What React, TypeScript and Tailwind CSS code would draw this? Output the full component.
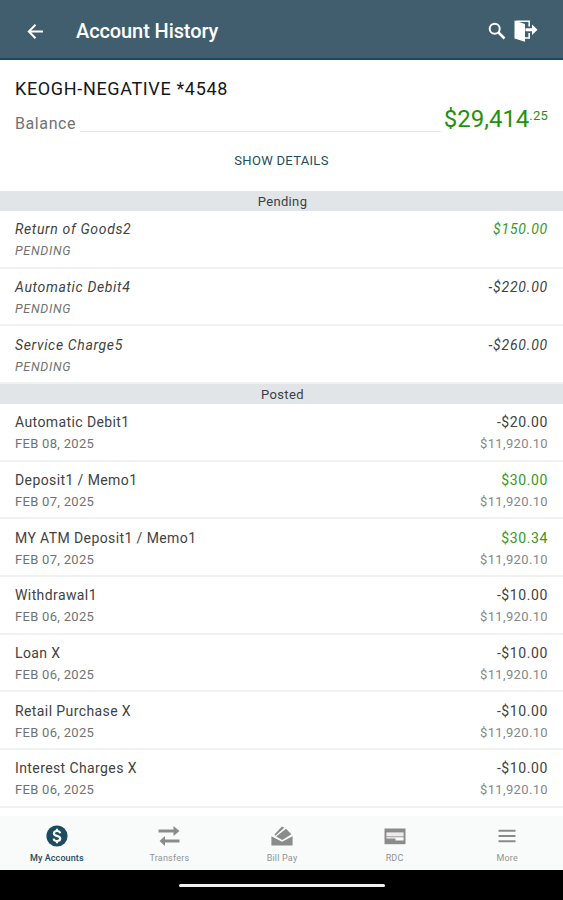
import { ReactNode } from "react";
import { clsx } from "clsx";

interface ITransaction {
    title: string;
    note: string;
    amount: string;
    balance?: string;
    isCredit?: boolean;
}

interface INavItem {
    label: string;
    icon: ReactNode;
    isActive?: boolean;
}

const pending: ITransaction[] = [
    { title: "Return of Goods2", note: "PENDING", amount: "$150.00", isCredit: true },
    { title: "Automatic Debit4", note: "PENDING", amount: "-$220.00" },
    { title: "Service Charge5", note: "PENDING", amount: "-$260.00" },
];

const posted: ITransaction[] = [
    { title: "Automatic Debit1", note: "FEB 08, 2025", amount: "-$20.00", balance: "$11,920.10" },
    { title: "Deposit1 / Memo1", note: "FEB 07, 2025", amount: "$30.00", balance: "$11,920.10", isCredit: true },
    { title: "MY ATM Deposit1 / Memo1", note: "FEB 07, 2025", amount: "$30.34", balance: "$11,920.10", isCredit: true },
    { title: "Withdrawal1", note: "FEB 06, 2025", amount: "-$10.00", balance: "$11,920.10" },
    { title: "Loan X", note: "FEB 06, 2025", amount: "-$10.00", balance: "$11,920.10" },
    { title: "Retail Purchase X", note: "FEB 06, 2025", amount: "-$10.00", balance: "$11,920.10" },
    { title: "Interest Charges X", note: "FEB 06, 2025", amount: "-$10.00", balance: "$11,920.10" },
];

const navItems: INavItem[] = [
    {
        label: "My Accounts",
        isActive: true,
        icon: (
            <svg width="22" height="22" viewBox="0 0 22 22" fill="none">
                <circle cx="11" cy="11" r="10.6" fill="#1d4c60" />
                <path d="M14.2 8.2C13.8 6.7 12.6 6 11 6C9.2 6 7.9 6.9 7.9 8.4C7.9 11.6 14.2 10.2 14.2 13.5C14.2 15.1 12.8 16 11 16C9.2 16 7.9 15.2 7.6 13.6M11 3.8V6M11 16V18.2" stroke="white" strokeWidth="2.2" />
            </svg>
        ),
    },
    {
        label: "Transfers",
        icon: (
            <svg width="22" height="22" viewBox="0 0 22 22" fill="#8b8b8b">
                <path d="M0.5 4.5H15.5V1L21.5 6L15.5 11V7.5H0.5Z" />
                <path d="M21.5 14.5H7V11L1.5 16L7 21V17.5H21.5Z" />
            </svg>
        ),
    },
    {
        label: "Bill Pay",
        icon: (
            <svg width="22" height="22" viewBox="0 0 22 22" fill="#8b8b8b">
                <path d="M0.4 11.2L11 16.8L21.6 11.2V20.5H0.4Z" />
                <path d="M5.2 11.6L15 3.7L20.4 9.3L11.3 15Z" />
                <path d="M3.3 9.8L10.9 1.5L13.3 2.8L4.4 10.8Z" />
            </svg>
        ),
    },
    {
        label: "RDC",
        icon: (
            <svg width="22" height="22" viewBox="0 0 22 22">
                <path d="M0.5 3.5H21.5V19.2H0.5Z" fill="#8b8b8b" />
                <path d="M2.4 7.4H19.6V11.4H2.4Z" fill="#ececec" />
                <path d="M2.4 12.2H19.600V15.6H11.5V13.400H2.4Z" fill="#f9fafa" />
            </svg>
        ),
    },
    {
        label: "More",
        icon: (
            <svg width="22" height="22" viewBox="0 0 22 22" stroke="#8b8b8b" strokeWidth="1.9">
                <path d="M2.5 5.8H19.5M2.5 11H19.5M2.5 16.2H19.5" />
            </svg>
        ),
    },
];

function SectionTitle({ children }: { children: ReactNode }) {
    return (
        <div className="h-5 shrink-0 bg-[#e1e5e8] pl-0.5 text-center text-[13px] leading-[21px] tracking-[0.35px] text-[#3b4043]">
            {children}
        </div>
    );
}

function TransactionRow({ item, isPending }: { item: ITransaction; isPending?: boolean }) {
    return (
        <div
            className={clsx(
                "flex h-[57.67px] shrink-0 justify-between border-b-2 border-[#f0f1f1] px-[15px] pt-[7.4px] text-[#404344]",
                isPending && "italic"
            )}
        >
            <div>
                <div className={clsx("text-sm leading-[22px]", isPending ? "tracking-[0.65px]" : "tracking-[0.4px]")}>
                    {item.title}
                </div>
                <div className={clsx("leading-[21px] text-[#707374]", isPending ? "text-[12.5px] tracking-[0.7px]" : "text-[13px] tracking-[0.3px]")}>
                    {item.note}
                </div>
            </div>
            <div className="text-right">
                <div
                    className={clsx(
                        "text-sm leading-[22px]",
                        isPending ? "tracking-[0.8px]" : "tracking-[0.6px]",
                        item.isCredit && "text-[#389727]"
                    )}
                >
                    {item.amount}
                </div>
                {item.balance && (
                    <div className="text-[13px] leading-[21px] tracking-[0.35px] text-[#858788]">{item.balance}</div>
                )}
            </div>
        </div>
    );
}

function App() {
    return (
        <div className="flex h-[900px] w-[563px] flex-col overflow-hidden bg-white font-['Roboto',sans-serif]">
            <header className="flex h-[60px] shrink-0 items-center border-b-2 border-[#174a60] bg-[#405e6e] pr-[25px] pl-[27px] pt-1 text-white">
                <svg width="17" height="17" viewBox="0 0 17 17" fill="none" stroke="white" strokeWidth="2">
                    <path d="M8.5 1.7L1.8 8.5L8.5 15.3M1.8 8.5H16" />
                </svg>
                <h1 className="ml-8 grow text-xl font-medium tracking-[-0.1px]">Account History</h1>
                <svg width="18" height="18" viewBox="0 0 18 18" fill="none" stroke="white">
                    <circle cx="6.7" cy="6.7" r="5" strokeWidth="2" />
                    <path d="M10.5 10.5L16.5 16.5" strokeWidth="2.5" />
                </svg>
                <svg className="ml-2" width="24" height="22" viewBox="0 0 24 22" fill="white">
                    <path d="M0.5 0.5L11 4V21.8L0.5 18.5Z" />
                    <path d="M2 1.2H15.2V6.5M15.2 13V18H11" fill="none" stroke="white" strokeWidth="1.6" />
                    <path d="M11.5 8.2H18V4.5L23.5 9.7L18 15V11.2H11.5Z" />
                </svg>
            </header>

            {/* account summary */}
            <section className="flex h-[131px] shrink-0 flex-col px-[15px] pt-[17px]">
                <h2 className="text-lg leading-6 tracking-[0.65px] text-[#151718]">KEOGH-NEGATIVE *4548</h2>
                <div className="flex h-[31px] text-[#707374]">
                    <span className="pt-[11px] text-base leading-6 tracking-[0.6px]">Balance</span>
                    <span className="mr-[3px] ml-1 grow border-b border-[#e5e5e5]" />
                    <span className="flex text-[#1f930f]">
                        <span className="pt-[3px] text-2xl leading-[30px]">$29,414</span>
                        <span className="pt-[7px] text-[13px] leading-4 tracking-[0.2px]">.25</span>
                    </span>
                </div>
                <button className="mt-[19px] text-[13px] leading-5 tracking-[0.3px] text-[#1d4c60]">SHOW DETAILS</button>
            </section>

            <SectionTitle>Pending</SectionTitle>
            {pending.map((item) => (
                <TransactionRow key={item.title} item={item} isPending />
            ))}
            <SectionTitle>Posted</SectionTitle>
            {posted.map((item) => (
                <TransactionRow key={item.title} item={item} />
            ))}

            {/* bottom tabs */}
            <nav className="mt-auto grid h-[54px] shrink-0 grid-cols-5 bg-[#f9fafa]">
                {navItems.map(({ label, icon, isActive }) => (
                    <div key={label} className="flex flex-col items-center pt-[9px] pl-px">
                        {icon}
                        <span
                            className={clsx(
                                "mt-[5px] text-[9px] leading-3",
                                isActive ? "font-medium tracking-[0.1px] text-[#1d4c60]" : "tracking-[0.2px] text-[#929494]"
                            )}
                        >
                            {label}
                        </span>
                    </div>
                ))}
            </nav>
            <div className="flex h-[30px] shrink-0 justify-center bg-black pt-[14px]">
                <div className="h-[3px] w-[206px] rounded-full bg-[#f0f0f0]" />
            </div>
        </div>
    );
}

export default App;
